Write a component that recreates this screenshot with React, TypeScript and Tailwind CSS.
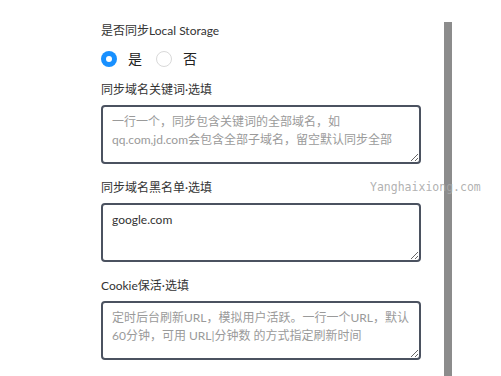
import { useState } from "react";

const font = { fontFamily: '"Lato", "Noto Sans CJK SC", sans-serif' };

function Radio({ checked, label, onClick }: any) {
  return (
    <label className="flex items-center gap-[11px] cursor-pointer" onClick={onClick}>
      {checked ? (
        <span className="w-4 h-4 rounded-full bg-[#1890ff] flex items-center justify-center">
          <span className="w-[6px] h-[6px] rounded-full bg-white" />
        </span>
      ) : (
        <span className="w-4 h-4 rounded-full border border-[#d9d9d9] bg-white" />
      )}
      <span className="text-[14px] text-[#222]">{label}</span>
    </label>
  );
}

function Field({ label, placeholder, value }: any) {
  return (
    <div>
      <div className="text-[12px] leading-[18px] text-[#333]">{label}</div>
      <textarea
        className="mt-[6px] block w-[320px] h-[59px] rounded-[4px] border-2 border-[#4b5260] px-[9px] pt-[6px] pb-[8px] text-[12px] leading-[18px] text-[#333] placeholder:text-[#9a9a9a] outline-none resize-y"
        style={font}
        placeholder={placeholder}
        defaultValue={value}
      />
    </div>
  );
}

export default function App() {
  const [sync, setSync] = useState(true);
  return (
    <div className="relative w-[501px] h-[376px] bg-white overflow-hidden" style={font}>
      <div className="pl-[101px] pt-[22px] flex flex-col">
        <div className="text-[12px] leading-[18px] text-[#333]">是否同步Local Storage</div>
        <div className="flex items-center gap-[14px] mt-[8px] mb-[12px]">
          <Radio checked={sync} label="是" onClick={() => setSync(true)} />
          <Radio checked={!sync} label="否" onClick={() => setSync(false)} />
        </div>
        <div className="flex flex-col gap-[15px]">
          <Field
            label="同步域名关键词·选填"
            placeholder={"一行一个，同步包含关键词的全部域名，如qq.com,jd.com会包含全部子域名，留空默认同步全部"}
          />
          <Field label="同步域名黑名单·选填" value="google.com" />
          <Field
            label="Cookie保活·选填"
            placeholder={"定时后台刷新URL，模拟用户活跃。一行一个URL，默认60分钟，可用 URL|分钟数 的方式指定刷新时间"}
          />
        </div>
      </div>
      {/* scrollbar */}
      <div className="absolute left-[444px] top-[22px] w-2 h-[354px] bg-[#8c8c8c]" />
      {/* watermark sits over everything */}
      <div
        className="absolute left-[370px] top-[179px] text-[11.5px] leading-[16px] text-[#a8a8a8]/90 pointer-events-none"
        style={{ fontFamily: '"DejaVu Sans Mono", monospace' }}
      >
        Yanghaixiong.com
      </div>
    </div>
  );
}
